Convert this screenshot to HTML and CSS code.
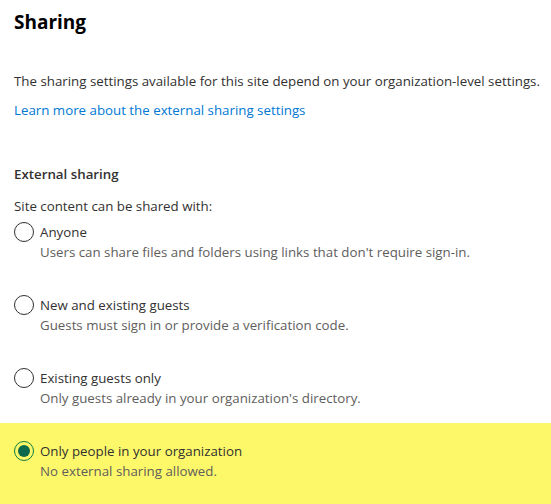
FILE: index.html
```html
<!DOCTYPE html>
<html lang="en">
<head>
  <meta charset="UTF-8">
  <meta name="viewport" content="width=device-width, initial-scale=1.0">
  <title>Sharing</title>
  <link rel="stylesheet" href="styles.css">
</head>
<body>
  <div class="page">
    <h1 class="title">Sharing</h1>
    <p class="intro">The sharing settings available for this site depend on your organization-level settings.</p>
    <a class="learn-link" href="#">Learn more about the external sharing settings</a>

    <h2 class="section-title">External sharing</h2>
    <div class="group-label">Site content can be shared with:</div>

    <div class="options">
      <label class="option">
        <span class="radio"></span>
        <span class="option-text">
          <span class="option-name">Anyone</span>
          <span class="option-desc">Users can share files and folders using links that don't require sign-in.</span>
        </span>
      </label>
      <label class="option">
        <span class="radio"></span>
        <span class="option-text">
          <span class="option-name">New and existing guests</span>
          <span class="option-desc">Guests must sign in or provide a verification code.</span>
        </span>
      </label>
      <label class="option">
        <span class="radio"></span>
        <span class="option-text">
          <span class="option-name">Existing guests only</span>
          <span class="option-desc">Only guests already in your organization's directory.</span>
        </span>
      </label>
      <label class="option selected">
        <span class="radio checked"></span>
        <span class="option-text">
          <span class="option-name">Only people in your organization</span>
          <span class="option-desc">No external sharing allowed.</span>
        </span>
      </label>
    </div>
  </div>
</body>
</html>
```

FILE: styles.css
```css
body {
  margin: 0;
  background-color: #ffffff;
  font-family: "Open Sans", "Noto Sans", sans-serif;
  color: #323130;
  font-size: 13.3px;
}
.title {
  margin: 0;
  padding: 8px 14px 0;
  font-size: 19px;
  font-weight: 700;
  color: #000000;
  line-height: 28px;
}
.intro {
  margin: 35px 0 0 14px;
  line-height: 20px;
  white-space: nowrap;
}
.learn-link {
  display: block;
  margin: 9px 14px 0;
  color: #0078d4;
  text-decoration: none;
  line-height: 20px;
}
.section-title {
  margin: 44px 14px 0;
  font-size: 13.3px;
  font-weight: 600;
  line-height: 20px;
}
.group-label {
  margin: 12px 14px 0;
  line-height: 20px;
}
.options {
  display: flex;
  flex-direction: column;
}
.option {
  display: flex;
  align-items: flex-start;
  gap: 6px;
  padding: 18px 14px 15px;
}
.option:first-child {
  padding-top: 6px;
}
.option.selected {
  background-color: #fdf86a;
  padding-bottom: 40px;
}
.radio {
  flex: none;
  width: 18px;
  height: 18px;
  border: 1px solid #323130;
  border-radius: 50%;
  position: relative;
}
.radio.checked {
  border-color: #107c41;
}
.radio.checked::after {
  content: "";
  position: absolute;
  left: 3px;
  top: 3px;
  width: 12px;
  height: 12px;
  border-radius: 50%;
  background-color: #0b6a4b;
}
.option-text {
  display: flex;
  flex-direction: column;
}
.option-name {
  line-height: 20px;
  color: #323130;
}
.option-desc {
  line-height: 20px;
  color: #605e5c;
}
```
